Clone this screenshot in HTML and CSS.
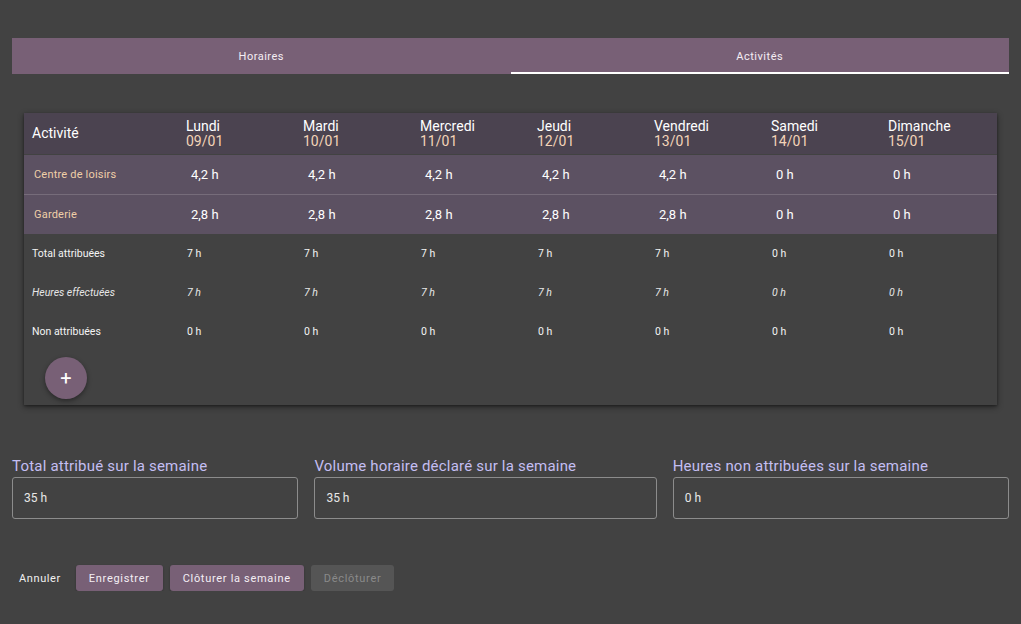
FILE: index.html
```html
<!DOCTYPE html>
<html lang="fr">
<head>
<meta charset="utf-8">
<link rel="stylesheet" href="styles.css">
</head>
<body>
<div class="page">
  <div class="tabs">
    <div class="tab">Horaires</div>
    <div class="tab active">Activités</div>
  </div>

  <div class="card">
    <div class="row head">
      <div class="c first">Activité</div>
      <div class="c"><div>Lundi</div><div class="date">09/01</div></div>
      <div class="c"><div>Mardi</div><div class="date">10/01</div></div>
      <div class="c"><div>Mercredi</div><div class="date">11/01</div></div>
      <div class="c"><div>Jeudi</div><div class="date">12/01</div></div>
      <div class="c"><div>Vendredi</div><div class="date">13/01</div></div>
      <div class="c"><div>Samedi</div><div class="date">14/01</div></div>
      <div class="c"><div>Dimanche</div><div class="date">15/01</div></div>
    </div>
    <div class="row act sep">
      <div class="c first name">Centre de loisirs</div>
      <div class="c v">4,2 h</div><div class="c v">4,2 h</div><div class="c v">4,2 h</div><div class="c v">4,2 h</div><div class="c v">4,2 h</div><div class="c v">0 h</div><div class="c v">0 h</div>
    </div>
    <div class="row act">
      <div class="c first name">Garderie</div>
      <div class="c v">2,8 h</div><div class="c v">2,8 h</div><div class="c v">2,8 h</div><div class="c v">2,8 h</div><div class="c v">2,8 h</div><div class="c v">0 h</div><div class="c v">0 h</div>
    </div>
    <div class="row sum">
      <div class="c first">Total attribuées</div>
      <div class="c">7 h</div><div class="c">7 h</div><div class="c">7 h</div><div class="c">7 h</div><div class="c">7 h</div><div class="c">0 h</div><div class="c">0 h</div>
    </div>
    <div class="row sum it">
      <div class="c first">Heures effectuées</div>
      <div class="c">7 h</div><div class="c">7 h</div><div class="c">7 h</div><div class="c">7 h</div><div class="c">7 h</div><div class="c">0 h</div><div class="c">0 h</div>
    </div>
    <div class="row sum">
      <div class="c first">Non attribuées</div>
      <div class="c">0 h</div><div class="c">0 h</div><div class="c">0 h</div><div class="c">0 h</div><div class="c">0 h</div><div class="c">0 h</div><div class="c">0 h</div>
    </div>
    <div class="fab-wrap">
      <button class="fab">+</button>
    </div>
  </div>

  <div class="fields">
    <div class="field f1">
      <label>Total attribué sur la semaine</label>
      <div class="box">35 h</div>
    </div>
    <div class="field f2">
      <label>Volume horaire déclaré sur la semaine</label>
      <div class="box">35 h</div>
    </div>
    <div class="field f3">
      <label>Heures non attribuées sur la semaine</label>
      <div class="box">0 h</div>
    </div>
  </div>

  <div class="actions">
    <span class="cancel">Annuler</span>
    <button class="btn">Enregistrer</button>
    <button class="btn">Clôturer la semaine</button>
    <button class="btn disabled">Déclôturer</button>
  </div>
</div>
</body>
</html>
```

FILE: styles.css
```css
html, body {
  margin: 0;
  padding: 0;
  background: #424242;
  font-family: Roboto, "Liberation Sans", sans-serif;
  color: #fff;
}
.page {
  padding: 38px 12px 0 12px;
  width: 997px;
}
.tabs {
  display: flex;
  background: #786076;
  height: 36px;
}
.tab {
  flex: 1;
  display: flex;
  align-items: center;
  justify-content: center;
  font-size: 11px;
  letter-spacing: 0.5px;
  color: #f4eef4;
  box-sizing: border-box;
}
.tab.active {
  border-bottom: 2px solid #fff;
  padding-top: 2px;
}
.card {
  margin: 39px 12px 0 12px;
  background: #424242;
  box-shadow: 0 2px 6px rgba(0,0,0,0.45), 0 1px 2px rgba(0,0,0,0.3);
  padding-bottom: 6px;
}
.row {
  display: grid;
  grid-template-columns: 154px repeat(7, 1fr);
  align-items: center;
}
.c {
  padding-left: 8px;
}
.head {
  background: #4b4350;
  height: 41px;
  font-size: 14px;
  line-height: 15px;
}
.date {
  color: #f3d4b8;
}
.act {
  background: #5c5162;
  height: 39px;
  font-size: 13px;
}
.act.sep {
  border-bottom: 1px solid #766c7a;
  margin-top: 1px;
}
.act .name {
  font-size: 11px;
  color: #efcfa8;
  padding-left: 10px;
  letter-spacing: 0.2px;
}
.act .v {
  padding-left: 13px;
}
.sum {
  height: 39px;
  font-size: 10.5px;
  color: #f4f4f4;
}
.sum .c:not(.first) {
  padding-left: 9px;
}
.it {
  font-style: italic;
  color: #e6e6e6;
}
.fab-wrap {
  padding: 6px 0 0 21px;
}
.fab {
  width: 42px;
  height: 42px;
  border-radius: 50%;
  border: none;
  background: #786076;
  color: #fff;
  font-size: 20px;
  line-height: 42px;
  padding: 0;
  font-family: Roboto, sans-serif;
  box-shadow: 0 2px 5px rgba(0,0,0,0.4);
}
.fields {
  display: flex;
  gap: 16px;
  margin-top: 52px;
}
.field {
  display: flex;
  flex-direction: column;
}
.f1 { width: 287px; }
.f2 { width: 343px; }
.f3 { width: 337px; }
.field label {
  font-size: 15px;
  color: #c4bef2;
  line-height: 18px;
  margin-bottom: 2px;
  letter-spacing: 0.2px;
}
.box {
  height: 42px;
  box-sizing: border-box;
  border: 1px solid #8c8c8c;
  border-radius: 3px;
  padding-left: 11px;
  display: flex;
  align-items: center;
  font-size: 12px;
  color: #e8e8e8;
}
.actions {
  display: flex;
  align-items: center;
  gap: 7px;
  margin-top: 46px;
  padding-left: 7px;
}
.cancel {
  font-size: 11px;
  color: #f0f0f0;
  margin-right: 8px;
  letter-spacing: 0.6px;
}
.btn {
  height: 26px;
  border: none;
  border-radius: 3px;
  background: #786076;
  color: #f4eef4;
  font-family: Roboto, sans-serif;
  font-size: 11px;
  letter-spacing: 0.7px;
  padding: 0 13px;
  box-shadow: 0 1px 2px rgba(0,0,0,0.3);
}
.btn.disabled {
  background: #555555;
  color: #8a8a8a;
  box-shadow: none;
}
```
